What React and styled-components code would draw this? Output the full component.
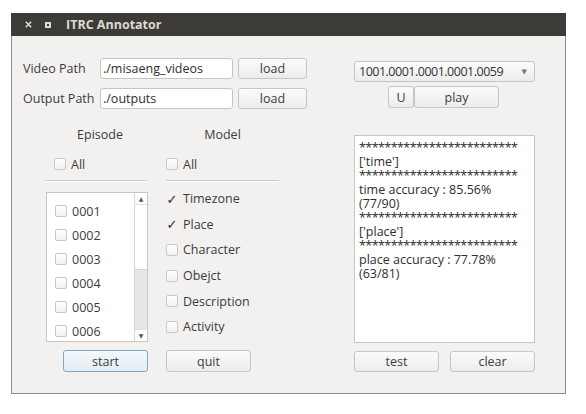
import React from 'react';
import styled, { createGlobalStyle, css } from 'styled-components';

const GlobalStyle = createGlobalStyle`
  html, body {
    margin: 0;
    padding: 0;
    background: #ffffff;
  }
  body {
    font-family: "Open Sans", "DejaVu Sans", sans-serif;
    font-size: 12.5px;
    color: #3c3c3c;
  }
`;

const Page = styled.div`
  padding: 13px 0 0 11px;
`;

const Window = styled.div`
  width: 555px;
  box-sizing: border-box;
  border: 1px solid #8c8c8c;
  border-top: none;
  background: #f2f1f0;
`;

const TitleBar = styled.div`
  height: 23px;
  margin: 0 -1px;
  background: #3c3b37;
  display: flex;
  align-items: center;
  padding-left: 14px;
  color: #dfdbd2;
`;

const CloseIcon = styled.svg`
  width: 7px;
  height: 7px;
`;

const MaxIcon = styled.span`
  width: 6px;
  height: 6px;
  box-sizing: border-box;
  border: 2px solid #dfdbd2;
  margin-left: 13px;
`;

const Title = styled.span`
  margin-left: 15px;
  font-weight: 700;
  font-size: 12.5px;
`;

const Body = styled.div`
  height: 357px;
  display: flex;
`;

const LeftPane = styled.div`
  width: 342px;
  display: flex;
  flex-direction: column;
`;

const PathForm = styled.div`
  padding: 22px 0 0 11px;
  display: flex;
  flex-direction: column;
  gap: 9px;
`;

const PathRow = styled.div`
  display: flex;
  align-items: center;
  height: 21px;
`;

const Label = styled.span`
  width: 77px;
`;

const TextInput = styled.div`
  width: 133px;
  height: 21px;
  box-sizing: border-box;
  border: 1px solid #c5c5c5;
  border-radius: 3px;
  background: #ffffff;
  padding-left: 2px;
  line-height: 19px;
  color: #2e2e2e;
`;

const buttonBase = css`
  box-sizing: border-box;
  height: ${p => p.$h || 22}px;
  border: 1px solid #c6c6c6;
  border-radius: 3px;
  background: linear-gradient(#fbfbfb, #ececec);
  color: #3c3c3c;
  font: inherit;
  padding: 0;
  display: flex;
  align-items: center;
  justify-content: center;
`;

const Button = styled.button`
  ${buttonBase}
  width: ${p => p.$w}px;
  margin-left: ${p => p.$ml || 0}px;

  ${p => p.$default && css`
    border-color: #7fa8c4;
    background: linear-gradient(#f3f8fb, #e3edf3);
  `}
`;

const Columns = styled.div`
  margin: 17px 0 0 33px;
  display: grid;
  grid-template-columns: 103px 113px;
  column-gap: 18px;
`;

const Header = styled.div`
  height: 18px;
  line-height: 18px;
  text-align: center;
  padding-left: ${p => p.$offset || 0}px;
`;

const CheckRow = styled.div`
  display: flex;
  align-items: center;
  gap: 5px;
  height: ${p => p.$h || 18}px;
  padding-left: ${p => p.$indent || 0}px;
`;

const AllRow = styled(CheckRow)`
  margin-top: 11px;
`;

const Box = styled.span`
  width: 12px;
  height: 12px;
  box-sizing: border-box;
  border: 1px solid ${p => (p.$checked ? 'transparent' : '#c8c8c8')};
  border-radius: 2px;
  background: ${p => (p.$checked ? 'transparent' : 'linear-gradient(#ffffff, #f1f1f1)')};
  display: flex;
  align-items: center;
  justify-content: center;
  font-size: 13px;
  font-weight: 700;
  color: #2a2a2a;
  flex: none;
`;

const Separator = styled.div`
  margin-top: 7px;
  height: 1px;
  background: #c9c9c9;
  box-shadow: 0 1px 0 #ffffff;
  width: ${p => p.$w}px;
`;

const ListBox = styled.div`
  margin-top: 11px;
  width: 102px;
  margin-left: 1px;
  height: 150px;
  box-sizing: border-box;
  border: 1px solid #c6c6c6;
  background: #ffffff;
  display: flex;
`;

const ListItems = styled.div`
  flex: 1;
  padding-top: 6px;
  overflow: hidden;
`;

const ScrollBar = styled.div`
  width: 12px;
  border-left: 1px solid #d6d6d6;
  display: flex;
  flex-direction: column;
  background: #ffffff;
`;

const ScrollArrow = styled.div`
  height: 11px;
  display: flex;
  align-items: center;
  justify-content: center;
  font-size: 6px;
  color: #555;
  border-${p => (p.$down ? 'top' : 'bottom')}: 1px solid #e0e0e0;
`;

const ScrollTrack = styled.div`
  flex: 1;
  display: flex;
  flex-direction: column;
`;

const ScrollThumb = styled.div`
  margin-top: auto;
  height: 59px;
  background: #e6e6e6;
  border-top: 1px solid #d6d6d6;
`;

const ModelList = styled.div`
  margin-top: 5px;
  display: flex;
  flex-direction: column;
`;

const ButtonRow = styled.div`
  grid-column: 1 / span 2;
  display: grid;
  grid-template-columns: 103px 113px;
  column-gap: 18px;
  margin-top: 8px;
`;

const RightPane = styled.div`
  width: 181px;
  padding-top: 25px;
  display: flex;
  flex-direction: column;
`;

const Combo = styled.div`
  ${buttonBase}
  height: 21px;
  justify-content: flex-start;
  padding: 0 7px 0 4px;
  color: #333;
`;

const ComboText = styled.span`
  letter-spacing: -0.5px;
`;

const ComboArrow = styled.span`
  margin-left: auto;
  font-size: 7px;
  color: #777;
`;

const PlayRow = styled.div`
  margin-top: 4px;
  display: flex;
  padding-left: 34px;
`;

const Output = styled.div`
  margin-top: 27px;
  height: 208px;
  box-sizing: border-box;
  border: 1px solid #c6c6c6;
  background: #ffffff;
  padding: 5px 0 0 4px;
  color: #2e2e2e;
`;

const OutLine = styled.div`
  height: 14px;
  line-height: 14px;
  white-space: nowrap;
  ${p => p.$stars && css`
    letter-spacing: -0.55px;
  `}
`;

const BottomButtons = styled.div`
  margin-top: 8px;
  display: flex;
  justify-content: space-between;
`;

const Check = ({ checked, label, h, indent }) => (
  <CheckRow $h={h} $indent={indent}>
    <Box $checked={checked}>{checked ? '✓' : ''}</Box>
    <span>{label}</span>
  </CheckRow>
);

const episodes = ['0001', '0002', '0003', '0004', '0005', '0006'];
const models = [
  { label: 'Timezone', checked: true },
  { label: 'Place', checked: true },
  { label: 'Character' },
  { label: 'Obejct' },
  { label: 'Description' },
  { label: 'Activity' },
];

const stars = '*'.repeat(25);
const outputLines = [
  stars,
  "['time']",
  stars,
  'time accuracy : 85.56%',
  '(77/90)',
  stars,
  "['place']",
  stars,
  'place accuracy : 77.78%',
  '(63/81)',
];

export default function App() {
  return (
    <Page>
      <GlobalStyle />
      <Window>
        <TitleBar>
          <CloseIcon viewBox="0 0 7 7">
            <path d="M0.8 0.8 L6.2 6.2 M6.2 0.8 L0.8 6.2" stroke="#dfdbd2" strokeWidth="1.6" />
          </CloseIcon>
          <MaxIcon />
          <Title>ITRC Annotator</Title>
        </TitleBar>
        <Body>
          <LeftPane>
            <PathForm>
              <PathRow>
                <Label>Video Path</Label>
                <TextInput>./misaeng_videos</TextInput>
                <Button $w={69} $h={21} $ml={5}>load</Button>
              </PathRow>
              <PathRow>
                <Label>Output Path</Label>
                <TextInput>./outputs</TextInput>
                <Button $w={69} $h={21} $ml={5}>load</Button>
              </PathRow>
            </PathForm>

            <Columns>
              <div>
                <Header $offset={7}>Episode</Header>
                <AllRow $indent={9}>
                  <Box />
                  <span>All</span>
                </AllRow>
                <Separator $w={102} />
                <ListBox>
                  <ListItems>
                    {episodes.map(e => (
                      <Check key={e} label={e} h={24} indent={8} />
                    ))}
                  </ListItems>
                  <ScrollBar>
                    <ScrollArrow>▲</ScrollArrow>
                    <ScrollTrack>
                      <ScrollThumb />
                    </ScrollTrack>
                    <ScrollArrow $down>▼</ScrollArrow>
                  </ScrollBar>
                </ListBox>
              </div>
              <div>
                <Header>Model</Header>
                <AllRow>
                  <Box />
                  <span>All</span>
                </AllRow>
                <Separator $w={113} />
                <ModelList>
                  {models.map(m => (
                    <Check key={m.label} label={m.label} checked={m.checked} h={25.6} />
                  ))}
                </ModelList>
              </div>
              <ButtonRow>
                <Button $w={85} $default style={{ justifySelf: 'end' }}>start</Button>
                <Button $w={85}>quit</Button>
              </ButtonRow>
            </Columns>
          </LeftPane>

          <RightPane>
            <Combo>
              <ComboText>1001.0001.0001.0001.0059</ComboText>
              <ComboArrow>▼</ComboArrow>
            </Combo>
            <PlayRow>
              <Button $w={26}>U</Button>
              <Button $w={85}>play</Button>
            </PlayRow>
            <Output>
              {outputLines.map((l, i) => (
                <OutLine key={i} $stars={l === stars}>{l}</OutLine>
              ))}
            </Output>
            <BottomButtons>
              <Button $w={85} $h={21}>test</Button>
              <Button $w={85} $h={21}>clear</Button>
            </BottomButtons>
          </RightPane>
        </Body>
      </Window>
    </Page>
  );
}
